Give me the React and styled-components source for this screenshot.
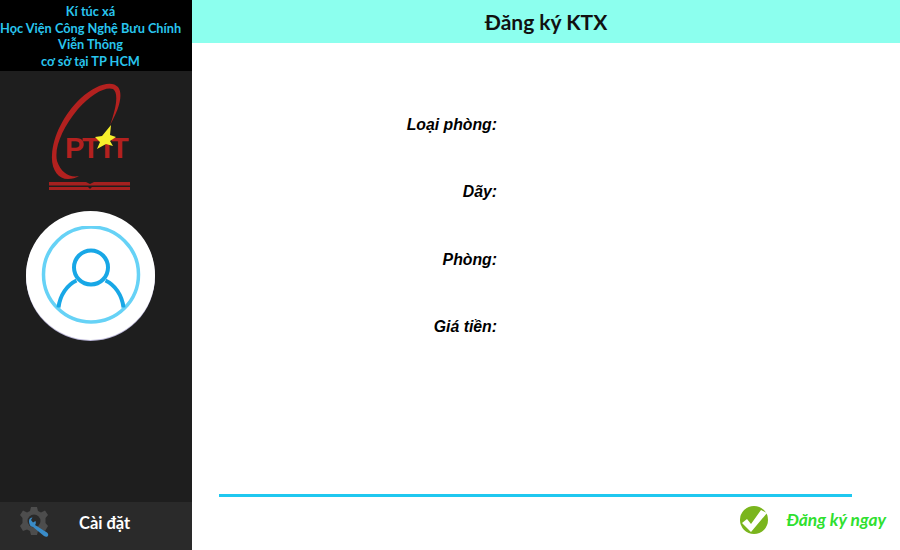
import React from "react";
import styled, { createGlobalStyle } from "styled-components";

const GlobalStyle = createGlobalStyle`
  html, body {
    margin: 0;
    padding: 0;
    background: #fff;
  }
`;

const Page = styled.div`
  display: flex;
  width: 900px;
  height: 550px;
  overflow: hidden;
  font-family: "Lato", "Liberation Sans", sans-serif;
`;

const Sidebar = styled.aside`
  display: flex;
  flex-direction: column;
  align-items: center;
  width: 192px;
  height: 550px;
  background: #1e1e1e;
`;

const Brand = styled.div`
  box-sizing: border-box;
  align-self: stretch;
  height: 71px;
  padding: 3px 11px 0 0;
  background: #000;
  color: #29c5ee;
  font-size: 12.75px;
  font-weight: 700;
  line-height: 16.6px;
  text-align: center;
  white-space: nowrap;
`;

const LogoWrap = styled.div`
  margin-top: 10px;
  margin-right: 14px;
  height: 110px;
`;

const Avatar = styled.div`
  display: flex;
  align-items: center;
  justify-content: center;
  width: 129px;
  height: 129px;
  margin-top: 20px;
  margin-right: 11px;
  border-radius: 50%;
  background: #fff;
  box-shadow: 0 1px 0 #b9b5d6;
`;

const Settings = styled.div`
  box-sizing: border-box;
  display: flex;
  align-items: center;
  align-self: stretch;
  gap: 28px;
  height: 48px;
  margin-top: auto;
  padding: 0 0 6px 20px;
  background: #2a2a2a;
  color: #fff;
  font-size: 16.5px;
  font-weight: 700;
`;

const Main = styled.main`
  display: flex;
  flex: 1;
  flex-direction: column;
  background: #fff;
`;

const TopBar = styled.header`
  height: 43px;
  background: #8cffee;
  color: #111;
  font-size: 21px;
  font-weight: 700;
  line-height: 44px;
  text-align: center;
`;

const Form = styled.div`
  display: flex;
  flex: 1;
  flex-direction: column;
  gap: 47.3px;
  padding-top: 72px;
  width: 305px;
`;

const Label = styled.div`
  height: 20px;
  color: #000;
  font-family: "Liberation Sans", Arial, sans-serif;
  font-size: 15.8px;
  font-style: italic;
  font-weight: 700;
  line-height: 20px;
  text-align: right;
`;

const Rule = styled.div`
  height: 3px;
  margin: 0 48px 0 27px;
  background: #1fc8f0;
`;

const Footer = styled.div`
  box-sizing: border-box;
  display: flex;
  align-items: center;
  justify-content: flex-end;
  gap: 18px;
  height: 53px;
  padding: 0 14px 8px 0;
  color: #2fe02f;
  font-size: 17.4px;
  font-style: italic;
  font-weight: 700;
`;

const PtitLogo = () => (
  <svg width="86" height="110" viewBox="0 0 86 110">
    <path
      d="M64 44 C72 30 78 14 72 6 C66 -1 50 3 35 17 C18 33 7 55 6 74 C5 88 12 98 22 98 C26 98 30 97 33 95 C24 97 15 92 11 80 C8 66 17 46 32 28 C45 13 60 5 67 8 C73 12 70 28 64 44 Z"
      fill="#b3211f"
    />
    <text
      x="19 36 57 65"
      y="77"
      fontFamily="Liberation Sans"
      fontWeight="700"
      fontSize="29"
      fill="#b3211f"
    >
      PTIT
    </text>
    <path
      d="M65 44 L64 54 L70 56 L64 60 L67 65 L60 63 L51 68 L54 61 L49 56 L56 55 Z"
      fill="#f7f02c"
    />
    <path
      d="M3 101 H40 L44 103 L48 101 H84 V104.500 H3 Z M3 106 H42 L44 108 L46 106 H84 V109 H3 Z"
      fill="#a5201f"
    />
  </svg>
);

const UserIcon = () => (
  <svg width="100" height="100" viewBox="0 0 100 100" fill="none">
    <circle cx="50" cy="48.500" r="47.500" stroke="#66d2f6" strokeWidth="3.500" />
    <circle cx="50" cy="41.500" r="17" stroke="#18a7e6" strokeWidth="4" />
    <path
      d="M17.500 81.500 C19 69 26 59 35.500 54.500 M82.500 81.500 C81 69 74 59 64.500 54.500"
      stroke="#18a7e6"
      strokeWidth="4"
    />
  </svg>
);

const GearWrench = () => (
  <svg width="31" height="32" viewBox="0 0 31 32">
    <path
      d="M11 0 H17 L18 4 L21 5.500 L25 3.500 L28 8 L25.500 11 V16 L28 19 L25 24 L21 22.500 L18 24 L17 28 H11 L10 24 L7 22.500 L3 24 L0 19 L2.500 16 V11 L0 8 L3 3.500 L7 5.500 L10 4 Z"
      fill="#4d4d4d"
    />
    <circle cx="14" cy="14" r="6.500" fill="#2a2a2a" />
    <path
      d="M9 14 C9 12 10.500 10.500 12.500 10.500 L11 13 L13 15.500 L15.500 14 C16 15.500 16 17 15 18 L27 25.500 C30 28.500 27 31 24 29 L13 20 C10.500 20 9 17 9 14 Z"
      fill="#3a8cc8"
    />
  </svg>
);

const CheckBadge = () => (
  <svg width="28" height="28" viewBox="0 0 28 28">
    <circle cx="14" cy="14" r="14" fill="#7ab51d" />
    <path d="M2 17 L7 13 L11 18 L21 4 L27 7 L11 26 Z" fill="#fff" />
  </svg>
);

const fields = ["Loại phòng:", "Dãy:", "Phòng:", "Giá tiền:"];

const App = () => {
  return (
    <Page>
      <GlobalStyle />
      <Sidebar>
        <Brand>
          Kí túc xá
          <br />
          Học Viện Công Nghệ Bưu Chính
          <br />
          Viễn Thông
          <br />
          cơ sở tại TP HCM
        </Brand>
        <LogoWrap>
          <PtitLogo />
        </LogoWrap>
        <Avatar>
          <UserIcon />
        </Avatar>
        <Settings>
          <GearWrench />
          Cài đặt
        </Settings>
      </Sidebar>
      <Main>
        <TopBar>Đăng ký KTX</TopBar>
        <Form>
          {fields.map((f) => (
            <Label key={f}>{f}</Label>
          ))}
        </Form>
        <Rule />
        <Footer>
          <CheckBadge />
          Đăng ký ngay
        </Footer>
      </Main>
    </Page>
  );
};

export default App;
